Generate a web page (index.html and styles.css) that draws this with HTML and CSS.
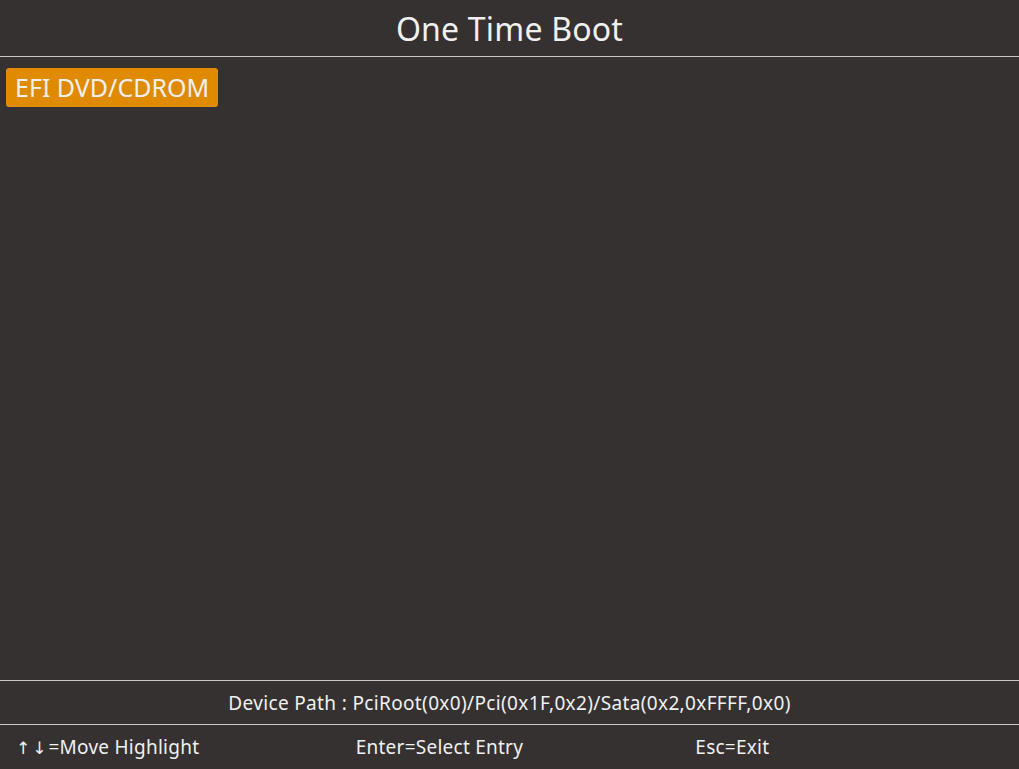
FILE: index.html
```html
<!DOCTYPE html>
<html>
<head>
<meta charset="utf-8">
<link rel="stylesheet" href="styles.css">
</head>
<body>
<div class="screen">
  <header class="title">One Time Boot</header>
  <main class="menu">
    <div class="entry selected">EFI DVD/CDROM</div>
  </main>
  <div class="path">Device Path : PciRoot(0x0)/Pci(0x1F,0x2)/Sata(0x2,0xFFFF,0x0)</div>
  <footer class="keys">
    <span class="key"><span class="arrows">↑↓</span>=Move Highlight</span>
    <span class="key">Enter=Select Entry</span>
    <span class="key">Esc=Exit</span>
  </footer>
</div>
</body>
</html>
```
FILE: styles.css
```css
html, body {
  margin: 0;
  padding: 0;
  background: #353130;
}
.screen {
  width: 1019px;
  height: 769px;
  display: flex;
  flex-direction: column;
  font-family: "Noto Sans", "Open Sans", sans-serif;
  color: #f0f0f0;
}
.title {
  height: 56px;
  border-bottom: 1px solid #c8c8c8;
  display: flex;
  align-items: center;
  justify-content: center;
  font-size: 32px;
  letter-spacing: 0.2px;
}
.menu {
  flex: 1;
  padding: 11px 6px;
  display: flex;
  flex-direction: column;
  align-items: flex-start;
}
.entry {
  height: 39px;
  padding: 0 9px;
  font-size: 25px;
  line-height: 39px;
  border-radius: 3px;
}
.entry.selected {
  background: #e08a00;
}
.path {
  height: 43px;
  border-top: 1px solid #c8c8c8;
  border-bottom: 1px solid #c8c8c8;
  display: flex;
  align-items: center;
  justify-content: center;
  font-size: 19px;
  letter-spacing: 0.35px;
}
.keys {
  height: 44px;
  display: grid;
  grid-template-columns: 1fr 1fr 1fr;
  align-items: center;
  font-size: 19px;
  letter-spacing: 0.25px;
}
.key {
  padding-left: 16px;
}
.arrows {
  font-family: "DejaVu Sans", sans-serif;
  font-size: 17px;
  letter-spacing: 2px;
}
```
